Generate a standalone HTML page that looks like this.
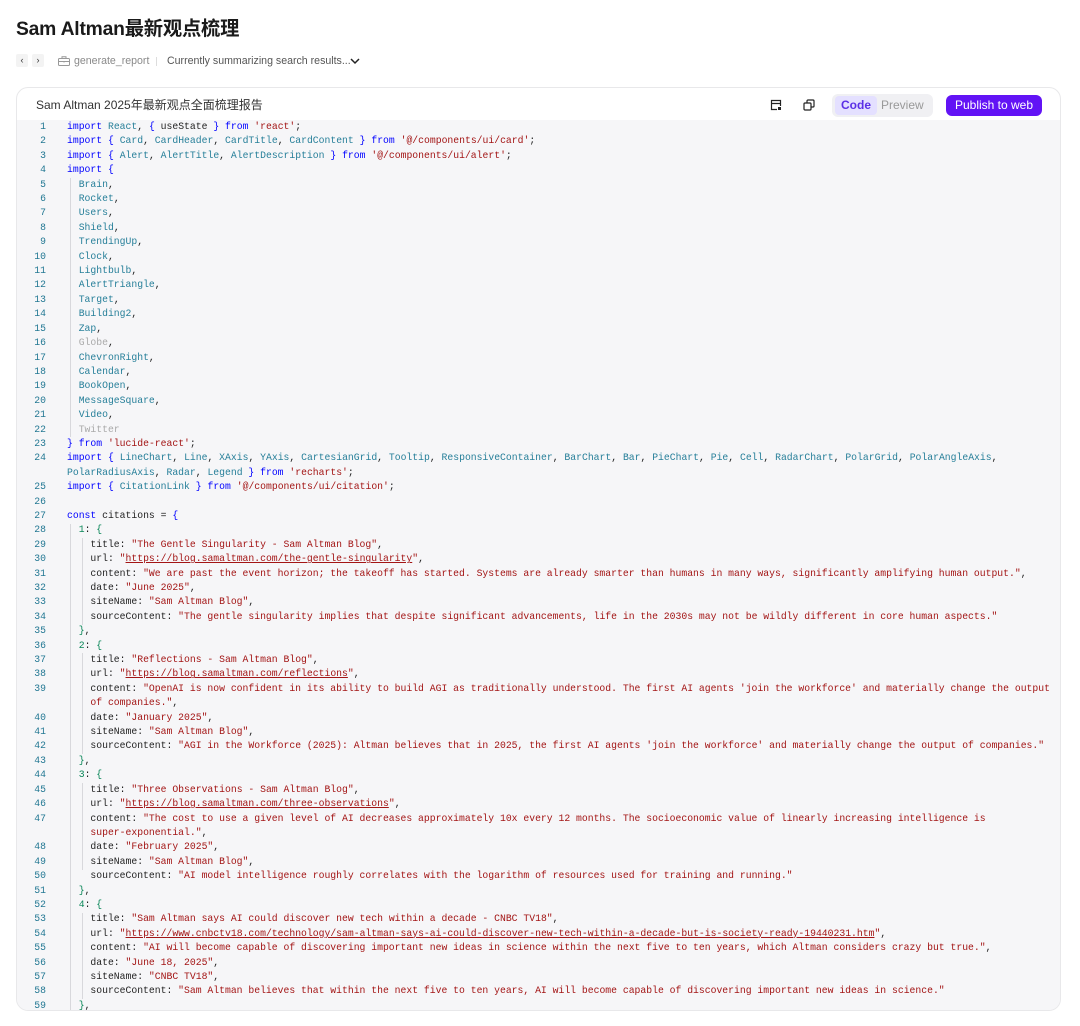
<!DOCTYPE html>
<html><head><meta charset="utf-8"><style>
*{margin:0;padding:0;box-sizing:border-box}
body{width:1080px;height:1026px;background:#fff;font-family:"Liberation Sans","Noto Sans CJK SC",sans-serif;position:relative;overflow:hidden;color:#1f1f1f}
h1{position:absolute;left:16px;top:13px;font-size:19.3px;font-weight:bold;color:#1a1a1a;letter-spacing:-0.2px}
.nb{position:absolute;top:54px;width:12px;height:13px;background:#f3f3f3;border-radius:2px;font-size:9px;text-align:center;line-height:13px;color:#333}
.tb{position:absolute;top:55px;font-size:10.6px;color:#8a8a8a}
.card{position:absolute;left:16px;top:87px;width:1045px;height:924px;border:1px solid #e8e8ea;border-radius:12px;overflow:hidden;background:#fff}
.ct{position:absolute;left:19px;top:8px;font-size:12px;color:#333}
.code{position:absolute;left:0;top:32px;width:100%;height:900px;background:#f6f6f8}
.rows{position:absolute;left:0;top:0;font-family:"Liberation Mono",monospace;font-size:9.76px;}
.r{height:14.41px;line-height:14.41px;white-space:pre;position:relative;padding-left:50px}
.r i{position:absolute;left:0;width:29px;text-align:right;font-style:normal;color:#237893}
.k{color:#0000ff}.t{color:#267f99}.s{color:#a31515}.u{color:#a31515;text-decoration:underline}.n{color:#098658}.g{color:#aaa}
.gd{position:absolute;width:1px;background:#d8d8dc}
.seg{position:absolute;left:815px;top:6px;width:101px;height:23px;background:#f0f0f3;border-radius:6px}
.seg .a{position:absolute;left:3px;top:2px;width:42px;height:19px;background:#e4e0ff;border-radius:4px;color:#5b30e6;font-weight:bold;font-size:12px;text-align:center;line-height:19px}
.seg .b{position:absolute;left:49px;top:2px;font-size:12px;color:#999;line-height:19px}
.pub{position:absolute;left:929px;top:7px;width:96px;height:21px;background:#6213f5;border-radius:6px;color:#fff;font-size:12px;text-align:center;line-height:21px}
</style></head><body>
<h1>Sam Altman最新观点梳理</h1>
<div class="nb" style="left:16px">‹</div><div class="nb" style="left:32px">›</div>
<svg style="position:absolute;left:58px;top:56px" width="12" height="10" viewBox="0 0 12 10" fill="none" stroke="#999" stroke-width="1"><rect x="0.5" y="2.5" width="11" height="7" rx="1"/><path d="M4 2.5V0.8h4v1.7M0.5 5.5h11M6 5v1.5"/></svg>
<div class="tb" style="left:74px">generate_report</div>
<div style="position:absolute;left:156px;top:57px;width:1px;height:9px;background:#ddd"></div>
<div class="tb" style="left:167px;color:#555">Currently summarizing search results...</div>
<svg style="position:absolute;left:350px;top:57px" width="10" height="8" viewBox="0 0 10 8"><path d="M1 2l4 4 4-4" stroke="#222" stroke-width="1.5" fill="none"/></svg>
<div class="card">
<div class="ct">Sam Altman 2025年最新观点全面梳理报告</div>
<svg style="position:absolute;left:753px;top:11px" width="12" height="12" viewBox="0 0 12 12" fill="none" stroke="#222" stroke-width="1.2"><path d="M7 10.5H1.5v-9h9V7M1.5 4.5h9"/><rect x="8" y="8" width="3" height="3" fill="#222" stroke="none"/></svg>
<svg style="position:absolute;left:786px;top:11px" width="12" height="12" viewBox="0 0 12 12" fill="none" stroke="#222" stroke-width="1.2"><rect x="1" y="4" width="7" height="7" rx="1"/><path d="M4 4V2a1 1 0 0 1 1-1h5a1 1 0 0 1 1 1v5a1 1 0 0 1-1 1H8"/></svg>
<div class="seg"><div class="a">Code</div><div class="b">Preview</div></div>
<div class="pub">Publish to web</div>
<div class="code">
<div class="gd" style="left:53px;top:57.6px;height:259.4px"></div>
<div class="gd" style="left:53px;top:403.5px;height:500px"></div>
<div class="gd" style="left:65px;top:418px;height:86.5px"></div>
<div class="gd" style="left:65px;top:533px;height:101px"></div>
<div class="gd" style="left:65px;top:663px;height:86.5px"></div>
<div class="gd" style="left:65px;top:792.5px;height:86.5px"></div>
<div class="rows">
<div class="r"><i>1</i><span class="k">import</span> <span class="t">React</span>, <span class="k">{</span> useState <span class="k">}</span> <span class="k">from</span> <span class="s">'react'</span>;</div>
<div class="r"><i>2</i><span class="k">import</span> <span class="k">{</span> <span class="t">Card</span>, <span class="t">CardHeader</span>, <span class="t">CardTitle</span>, <span class="t">CardContent</span> <span class="k">}</span> <span class="k">from</span> <span class="s">'@/components/ui/card'</span>;</div>
<div class="r"><i>3</i><span class="k">import</span> <span class="k">{</span> <span class="t">Alert</span>, <span class="t">AlertTitle</span>, <span class="t">AlertDescription</span> <span class="k">}</span> <span class="k">from</span> <span class="s">'@/components/ui/alert'</span>;</div>
<div class="r"><i>4</i><span class="k">import</span> <span class="k">{</span></div>
<div class="r"><i>5</i>  <span class="t">Brain</span>,</div>
<div class="r"><i>6</i>  <span class="t">Rocket</span>,</div>
<div class="r"><i>7</i>  <span class="t">Users</span>,</div>
<div class="r"><i>8</i>  <span class="t">Shield</span>,</div>
<div class="r"><i>9</i>  <span class="t">TrendingUp</span>,</div>
<div class="r"><i>10</i>  <span class="t">Clock</span>,</div>
<div class="r"><i>11</i>  <span class="t">Lightbulb</span>,</div>
<div class="r"><i>12</i>  <span class="t">AlertTriangle</span>,</div>
<div class="r"><i>13</i>  <span class="t">Target</span>,</div>
<div class="r"><i>14</i>  <span class="t">Building2</span>,</div>
<div class="r"><i>15</i>  <span class="t">Zap</span>,</div>
<div class="r"><i>16</i>  <span class="g">Globe</span>,</div>
<div class="r"><i>17</i>  <span class="t">ChevronRight</span>,</div>
<div class="r"><i>18</i>  <span class="t">Calendar</span>,</div>
<div class="r"><i>19</i>  <span class="t">BookOpen</span>,</div>
<div class="r"><i>20</i>  <span class="t">MessageSquare</span>,</div>
<div class="r"><i>21</i>  <span class="t">Video</span>,</div>
<div class="r"><i>22</i>  <span class="g">Twitter</span></div>
<div class="r"><i>23</i><span class="k">}</span> <span class="k">from</span> <span class="s">'lucide-react'</span>;</div>
<div class="r"><i>24</i><span class="k">import</span> <span class="k">{</span> <span class="t">LineChart</span>, <span class="t">Line</span>, <span class="t">XAxis</span>, <span class="t">YAxis</span>, <span class="t">CartesianGrid</span>, <span class="t">Tooltip</span>, <span class="t">ResponsiveContainer</span>, <span class="t">BarChart</span>, <span class="t">Bar</span>, <span class="t">PieChart</span>, <span class="t">Pie</span>, <span class="t">Cell</span>, <span class="t">RadarChart</span>, <span class="t">PolarGrid</span>, <span class="t">PolarAngleAxis</span>,</div>
<div class="r"><span class="t">PolarRadiusAxis</span>, <span class="t">Radar</span>, <span class="t">Legend</span> <span class="k">}</span> <span class="k">from</span> <span class="s">'recharts'</span>;</div>
<div class="r"><i>25</i><span class="k">import</span> <span class="k">{</span> <span class="t">CitationLink</span> <span class="k">}</span> <span class="k">from</span> <span class="s">'@/components/ui/citation'</span>;</div>
<div class="r"><i>26</i></div>
<div class="r"><i>27</i><span class="k">const</span> citations = <span class="k">{</span></div>
<div class="r"><i>28</i>  <span class="n">1</span>: <span class="n">{</span></div>
<div class="r"><i>29</i>    title: <span class="s">"The Gentle Singularity - Sam Altman Blog"</span>,</div>
<div class="r"><i>30</i>    url: <span class="s">"</span><span class="u">https://blog.samaltman.com/the-gentle-singularity</span><span class="s">"</span>,</div>
<div class="r"><i>31</i>    content: <span class="s">"We are past the event horizon; the takeoff has started. Systems are already smarter than humans in many ways, significantly amplifying human output."</span>,</div>
<div class="r"><i>32</i>    date: <span class="s">"June 2025"</span>,</div>
<div class="r"><i>33</i>    siteName: <span class="s">"Sam Altman Blog"</span>,</div>
<div class="r"><i>34</i>    sourceContent: <span class="s">"The gentle singularity implies that despite significant advancements, life in the 2030s may not be wildly different in core human aspects."</span></div>
<div class="r"><i>35</i>  <span class="n">}</span>,</div>
<div class="r"><i>36</i>  <span class="n">2</span>: <span class="n">{</span></div>
<div class="r"><i>37</i>    title: <span class="s">"Reflections - Sam Altman Blog"</span>,</div>
<div class="r"><i>38</i>    url: <span class="s">"</span><span class="u">https://blog.samaltman.com/reflections</span><span class="s">"</span>,</div>
<div class="r"><i>39</i>    content: <span class="s">"OpenAI is now confident in its ability to build AGI as traditionally understood. The first AI agents 'join the workforce' and materially change the output</span></div>
<div class="r">    <span class="s">of companies."</span>,</div>
<div class="r"><i>40</i>    date: <span class="s">"January 2025"</span>,</div>
<div class="r"><i>41</i>    siteName: <span class="s">"Sam Altman Blog"</span>,</div>
<div class="r"><i>42</i>    sourceContent: <span class="s">"AGI in the Workforce (2025): Altman believes that in 2025, the first AI agents 'join the workforce' and materially change the output of companies."</span></div>
<div class="r"><i>43</i>  <span class="n">}</span>,</div>
<div class="r"><i>44</i>  <span class="n">3</span>: <span class="n">{</span></div>
<div class="r"><i>45</i>    title: <span class="s">"Three Observations - Sam Altman Blog"</span>,</div>
<div class="r"><i>46</i>    url: <span class="s">"</span><span class="u">https://blog.samaltman.com/three-observations</span><span class="s">"</span>,</div>
<div class="r"><i>47</i>    content: <span class="s">"The cost to use a given level of AI decreases approximately 10x every 12 months. The socioeconomic value of linearly increasing intelligence is</span></div>
<div class="r">    <span class="s">super-exponential."</span>,</div>
<div class="r"><i>48</i>    date: <span class="s">"February 2025"</span>,</div>
<div class="r"><i>49</i>    siteName: <span class="s">"Sam Altman Blog"</span>,</div>
<div class="r"><i>50</i>    sourceContent: <span class="s">"AI model intelligence roughly correlates with the logarithm of resources used for training and running."</span></div>
<div class="r"><i>51</i>  <span class="n">}</span>,</div>
<div class="r"><i>52</i>  <span class="n">4</span>: <span class="n">{</span></div>
<div class="r"><i>53</i>    title: <span class="s">"Sam Altman says AI could discover new tech within a decade - CNBC TV18"</span>,</div>
<div class="r"><i>54</i>    url: <span class="s">"</span><span class="u">https://www.cnbctv18.com/technology/sam-altman-says-ai-could-discover-new-tech-within-a-decade-but-is-society-ready-19440231.htm</span><span class="s">"</span>,</div>
<div class="r"><i>55</i>    content: <span class="s">"AI will become capable of discovering important new ideas in science within the next five to ten years, which Altman considers crazy but true."</span>,</div>
<div class="r"><i>56</i>    date: <span class="s">"June 18, 2025"</span>,</div>
<div class="r"><i>57</i>    siteName: <span class="s">"CNBC TV18"</span>,</div>
<div class="r"><i>58</i>    sourceContent: <span class="s">"Sam Altman believes that within the next five to ten years, AI will become capable of discovering important new ideas in science."</span></div>
<div class="r"><i>59</i>  <span class="n">}</span>,</div>
</div></div></div>
</body></html>
